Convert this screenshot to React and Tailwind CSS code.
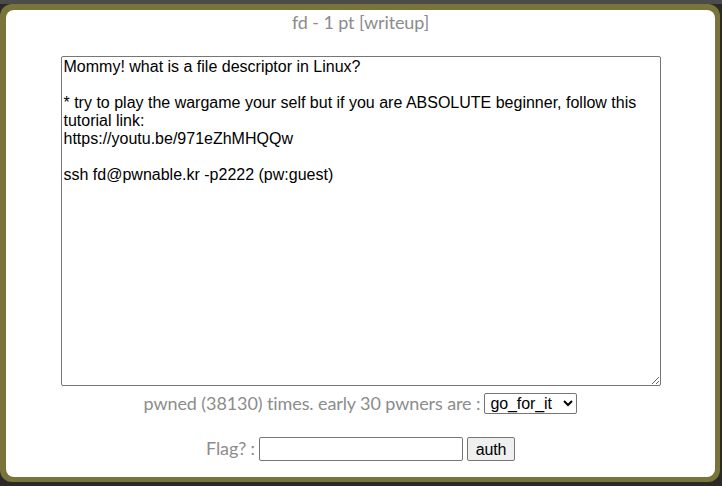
import React, { useState } from 'react';

export default function App() {
  const [flag, setFlag] = useState('');
  const desc = `Mommy! what is a file descriptor in Linux?

* try to play the wargame your self but if you are ABSOLUTE beginner, follow this tutorial link:
https://youtu.be/971eZhMHQQw

ssh fd@pwnable.kr -p2222 (pw:guest)`;

  return (
    <div className="w-[722px] h-[486px] bg-[#2b2a24] overflow-hidden">
      {/* top strip */}
      <div className="h-[4px] bg-[#4b4b4b]" />
      <div className="flex">
        {/* olive frame */}
        <div className="w-[720px] h-[478px] bg-[#78743b] rounded-[12px] pl-[6px] pr-[5px] pt-[6px] pb-[5px]">
          <div className="h-full bg-white rounded-[8px] flex flex-col items-center" style={{ fontFamily: 'Lato, "Open Sans", sans-serif' }}>
            <div className="text-[18px] leading-[22px] text-[#8c8c8c] mt-[1px] tracking-[-0.1px]">fd - 1 pt [writeup]</div>
            <textarea
              readOnly
              value={desc}
              className="mt-[23px] w-[600px] h-[330px] border border-[#767676] rounded-[2px] px-[2px] py-[1px] text-[16px] leading-[18px] text-black resize-y outline-none"
              style={{ fontFamily: '"Liberation Sans", Arial, sans-serif' }}
            />
            <div className="mt-[4px] flex items-center gap-[4px] text-[18px] text-[#8c8c8c] tracking-[-0.1px]">
              <span>pwned (38130) times. early 30 pwners are :</span>
              <select
                className="h-[21px] w-[93px] border border-[#767676] rounded-[2px] text-[16px] leading-[18px] text-black px-[1px] bg-white"
                style={{ fontFamily: '"Liberation Sans", Arial, sans-serif' }}
                defaultValue="go_for_it"
              >
                <option>go_for_it</option>
              </select>
            </div>
            <div className="mt-[18px] flex items-center text-[18px] text-[#8c8c8c] tracking-[-0.1px]">
              <span className="mr-[4px]">Flag? :</span>
              <input
                value={flag}
                onChange={(e) => setFlag(e.target.value)}
                className="w-[204px] h-[24px] border border-[#767676] rounded-[2px] px-[2px] outline-none bg-white"
              />
              <button
                className="ml-[4px] h-[24px] w-[48px] border border-[#767676] rounded-[2px] bg-[#efefef] text-[16px] text-black"
                style={{ fontFamily: '"Liberation Sans", Arial, sans-serif' }}
              >
                auth
              </button>
            </div>
          </div>
        </div>
        <div className="w-[2px] h-[478px] bg-[#2b2a24]" />
      </div>
    </div>
  );
}
